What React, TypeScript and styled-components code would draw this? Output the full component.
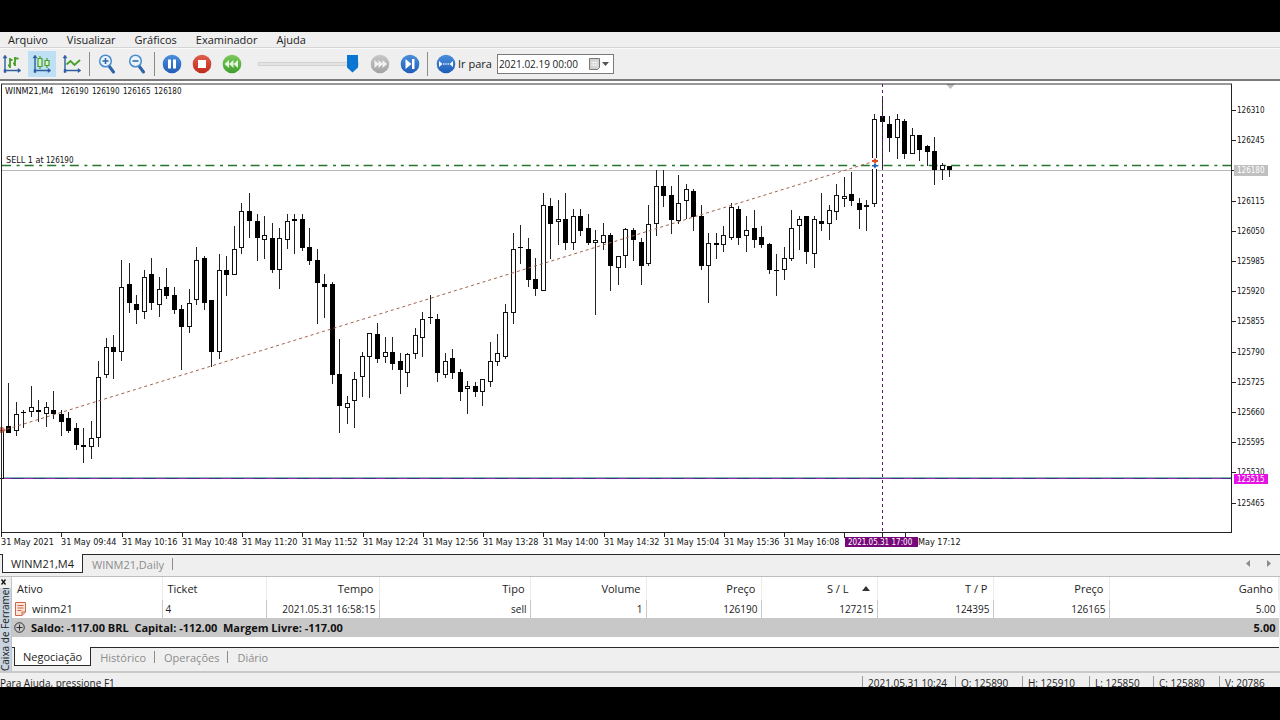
import React from "react";
import styled, { createGlobalStyle } from "styled-components";

const UI = '"Open Sans", "Noto Sans", sans-serif';
const CHART = '"DejaVu Sans Condensed", "DejaVu Sans", sans-serif';

const Global = createGlobalStyle`
  * { box-sizing: border-box; }
  body { margin: 0; background: #000; color: #222; font-family: ${UI}; font-size: 11px; line-height: 16px; }
  button, input { font: inherit; color: inherit; border: 0; padding: 0; margin: 0; background: none; }
`;

const Screen = styled.div`
  min-height: 100vh;
  padding: 32px 0 33px;
  background: #000;
  overflow: hidden;
`;
const Window = styled.main`
  display: flex;
  flex-direction: column;
  background: #efefef;
`;

const MenuBar = styled.nav`
  display: flex;
  gap: 19px;
  height: 16px;
  padding: 0 8px;
  border-bottom: 1px solid #d4d4d4;
`;
const MenuItem = styled.button`
  line-height: 14px;
`;

const Toolbar = styled.div`
  display: flex;
  align-items: center;
  gap: 2px;
  height: 33px;
  margin-left: -2px;
  padding-bottom: 1px;
  border-top: 1px solid #fafafa;
  border-bottom: 2px solid #7d7a7d;
`;
const ToolButton = styled.button<{ $on?: boolean }>`
  display: flex;
  align-items: center;
  justify-content: center;
  flex: none;
  width: 28px;
  height: 26px;
  background: ${(p) => (p.$on ? "#bfdff5" : "transparent")};
`;
const Separator = styled.span`
  width: 1px;
  height: 24px;
  margin: 0 1px;
  background: #8c8c8c;
`;
const GoTo = styled.button`
  display: flex;
  align-items: center;
  gap: 2px;
  margin-left: 5px;
`;
const Slider = styled.input`
  appearance: none;
  width: 101px;
  height: 20px;
  margin: 0 5px 0 10px;
  &::-webkit-slider-runnable-track {
    height: 4px;
    background: #e2e2e2;
    border: 1px solid #d3d3d3;
  }
  &::-webkit-slider-thumb {
    appearance: none;
    width: 11px;
    height: 18px;
    margin-top: -8px;
    background: #0a76d1;
    clip-path: polygon(0 0, 100% 0, 100% 72%, 50% 100%, 0 72%);
  }
`;
const DateBox = styled.div`
  display: flex;
  align-items: center;
  width: 117px;
  height: 20px;
  margin-left: 3px;
  padding: 0 4px 0 1px;
  border: 1px solid #7a7a7a;
  background: #fff;
`;
const DateInput = styled.input`
  flex: 1;
  min-width: 0;
  font-size: 10px;
`;
const DateButton = styled.button`
  display: flex;
  flex: none;
`;

const ChartArea = styled.section`
  height: 473px;
  background: #fff;
`;
const ChartSvg = styled.svg`
  display: block;
  width: 100%;
  height: 100%;
  font-family: ${CHART};
`;

const TabBar = styled.div`
  display: flex;
  align-items: flex-start;
  height: 22px;
  padding-left: 2px;
  border-top: 1px solid #2b2b2b;
  background: #efefef;
`;
const Tab = styled.button<{ $active?: boolean }>`
  height: ${(p) => (p.$active ? 19 : 18)}px;
  margin-top: ${(p) => (p.$active ? -1 : 0)}px;
  padding: ${(p) => (p.$active ? "1px 8px 0" : "1px 8px 0 9px")};
  line-height: 16px;
  color: ${(p) => (p.$active ? "#1c1c1c" : "#8c8c8c")};
  background: ${(p) => (p.$active ? "#fff" : "transparent")};
  border: solid #2b2b2b;
  border-width: ${(p) => (p.$active ? "0 1px 1px 1px" : "0")};
`;
const TabRule = styled.span`
  width: 1px;
  height: 12px;
  margin-top: 3px;
  background: #8c8c8c;
`;
const TabScroll = styled.div`
  display: flex;
  gap: 15px;
  margin: 5px 9px 0 auto;
`;
const ArrowButton = styled.button`
  display: flex;
`;

const Toolbox = styled.section`
  display: flex;
  height: 95px;
  border-top: 1px solid #bdbdbd;
`;
const SideStrip = styled.div`
  display: flex;
  flex-direction: column;
  align-items: center;
  flex: none;
  width: 12px;
  border-right: 1px solid #c4c4c4;
`;
const CloseButton = styled.button`
  display: flex;
  padding: 2px 4px 3px 0;
`;
const SideTitle = styled.div`
  flex: 1;
  width: 11px;
  min-height: 0;
  overflow: hidden;
  background: #c8d4e0;
  writing-mode: vertical-rl;
  transform: rotate(180deg);
  font-size: 10px;
  line-height: 11px;
  white-space: nowrap;
`;
const ToolboxBody = styled.div`
  display: flex;
  flex-direction: column;
  flex: 1;
  min-width: 0;
  padding-right: 1px;
`;
const TableArea = styled.div`
  height: 70px;
  background: #fff;
`;
const Table = styled.table`
  width: 100%;
  table-layout: fixed;
  border-collapse: collapse;
`;
const Head = styled.th<{ $left?: boolean }>`
  height: 23px;
  padding: 0 5px;
  font-weight: 400;
  text-align: ${(p) => (p.$left ? "left" : "right")};
  border-right: 1px solid #ececec;
`;
const SortArrow = styled.svg`
  margin: 0 2px 2px 13px;
`;
const Cell = styled.td<{ $left?: boolean }>`
  height: 18px;
  padding: 0 3px;
  font-size: 10px;
  text-align: ${(p) => (p.$left ? "left" : "right")};
  border-right: 1px solid #c9c9c9;
  &:last-child { border-right: 0; }
`;
const WithIcon = styled.span`
  display: flex;
  align-items: center;
  gap: 6px;
  font-size: 11px;
`;
const TotalRow = styled.tr`
  background: #c8c8c8;
  font-weight: 700;
`;
const TotalCell = styled.td`
  height: 19px;
  padding: 0 3px 0 2px;
  color: #111;
  white-space: pre;
  &:last-child { text-align: right; }
`;
const TotalText = styled.span`
  display: flex;
  align-items: center;
  gap: 6px;
`;

const StatusBar = styled.footer`
  display: flex;
  height: 16px;
  border-top: 2px solid #c9c9c9;
  overflow: hidden;
  font-size: 10px;
  line-height: 20px;
`;
const StatusHint = styled.span`
  flex: 1;
`;
const StatusCell = styled.span<{ $w: number }>`
  width: ${(p) => p.$w}px;
  height: 20px;
  margin-top: 3px;
  padding-left: 5px;
  line-height: 14px;
  border-left: 1px solid #9a9a9a;
`;

/* open/close bodies in plot units: high, body top, body bottom, low, kind (1 = falling, 0 = rising) */
const candles: number[][] = [
  [430, 430, 479, 479, 0], [383, 426, 433, 433, 1], [402, 414, 431, 436, 0], [410, 412, 412, 428, 1],
  [386, 407, 412, 417, 0], [400, 410, 412, 422, 1], [402, 407, 414, 427, 0], [391, 410, 414, 419, 1],
  [410, 414, 422, 436, 1], [412, 418, 431, 433, 1], [423, 428, 445, 450, 1], [428, 445, 447, 463, 1],
  [421, 438, 447, 459, 0], [361, 377, 438, 447, 0], [338, 347, 375, 378, 0], [335, 347, 352, 379, 1],
  [260, 287, 352, 361, 0], [263, 284, 303, 313, 1], [295, 304, 310, 324, 1], [270, 277, 312, 319, 0],
  [258, 274, 303, 310, 1], [277, 289, 305, 317, 0], [268, 287, 296, 299, 1], [287, 295, 310, 314, 1],
  [305, 309, 327, 370, 1], [289, 303, 327, 333, 0], [247, 260, 300, 305, 0], [256, 258, 303, 310, 1],
  [300, 300, 352, 367, 1], [254, 270, 352, 359, 0], [256, 270, 275, 296, 1], [226, 249, 275, 275, 0],
  [203, 211, 248, 254, 0], [193, 211, 221, 238, 1], [214, 221, 238, 261, 1], [216, 235, 240, 259, 0],
  [223, 238, 270, 273, 1], [228, 238, 270, 289, 0], [214, 221, 240, 249, 0], [214, 219, 221, 254, 1],
  [214, 219, 248, 251, 1], [228, 247, 261, 265, 1], [249, 260, 283, 324, 1], [274, 284, 287, 318, 1],
  [282, 284, 375, 384, 1], [339, 374, 406, 433, 1], [396, 403, 408, 424, 0], [372, 379, 401, 428, 0],
  [352, 356, 377, 397, 0], [333, 333, 357, 398, 0], [323, 334, 359, 363, 1], [337, 352, 357, 363, 0],
  [337, 352, 364, 370, 1], [353, 361, 370, 394, 1], [353, 354, 373, 387, 0], [328, 335, 354, 359, 0],
  [312, 319, 338, 357, 0], [295, 317, 317, 324, 1], [314, 319, 373, 382, 1], [353, 361, 375, 378, 0],
  [349, 358, 373, 379, 1], [369, 372, 392, 401, 1], [381, 386, 389, 414, 0], [382, 386, 392, 397, 1],
  [379, 379, 392, 406, 0], [342, 361, 382, 387, 0], [334, 353, 362, 366, 0], [304, 312, 357, 359, 0],
  [233, 249, 313, 324, 0], [225, 247, 247, 264, 1], [238, 249, 280, 287, 1], [258, 279, 289, 296, 1],
  [193, 205, 291, 291, 0], [198, 206, 224, 259, 1], [200, 219, 222, 245, 0], [193, 219, 243, 250, 1],
  [209, 216, 243, 250, 0], [209, 216, 231, 236, 1], [214, 228, 243, 245, 1], [230, 240, 243, 315, 0],
  [223, 235, 243, 250, 0], [233, 235, 266, 291, 1], [256, 256, 268, 285, 0], [228, 229, 256, 268, 0],
  [228, 230, 240, 261, 1], [238, 242, 266, 285, 1], [205, 224, 264, 266, 0], [170, 186, 224, 236, 0],
  [170, 186, 196, 207, 1], [186, 195, 220, 234, 1], [175, 203, 221, 224, 0], [184, 189, 201, 219, 0],
  [189, 191, 217, 231, 1], [205, 216, 266, 270, 1], [233, 243, 266, 303, 0], [233, 243, 245, 259, 1],
  [226, 235, 245, 252, 0], [203, 207, 238, 240, 0], [206, 209, 238, 245, 1], [216, 230, 236, 252, 0],
  [210, 228, 240, 248, 1], [226, 237, 245, 248, 1], [243, 244, 270, 274, 1], [254, 270, 270, 296, 1],
  [247, 258, 270, 280, 0], [210, 228, 259, 261, 0], [216, 219, 226, 250, 0], [216, 216, 252, 264, 1],
  [216, 219, 254, 268, 0], [193, 221, 224, 231, 1], [205, 210, 224, 240, 0], [184, 195, 212, 220, 0],
  [177, 196, 199, 207, 0], [172, 194, 201, 206, 1], [198, 203, 210, 229, 1], [200, 205, 207, 231, 0],
  [114, 119, 204, 207, 0], [97, 116, 122, 168, 1], [116, 124, 138, 152, 1], [114, 119, 138, 159, 0],
  [119, 121, 154, 159, 1], [128, 135, 154, 154, 0], [135, 135, 150, 161, 1], [145, 146, 152, 166, 1],
  [137, 151, 170, 185, 1], [163, 165, 170, 180, 0], [166, 166, 170, 177, 1],
];

const STEP = 7.53;

function Candle({ i, d }: { i: number; d: number[] }) {
  const [high, top, bottom, low, falling] = d;
  const x = Math.floor(1 + STEP * i);
  return (
    <g>
      <path d={`M${x + 0.5} ${high}V${low}`} stroke="#222" />
      {falling ? (
        <rect x={x - 2} y={top} width={5} height={Math.max(bottom - top, 1)} fill="#000" />
      ) : (
        <rect x={x - 1.5} y={top + 0.5} width={4} height={Math.max(bottom - top - 1, 1)} fill="#fff" stroke="#111" />
      )}
    </g>
  );
}

const times = [
  "31 May 2021", "31 May 09:44", "31 May 10:16", "31 May 10:48", "31 May 11:20", "31 May 11:52", "31 May 12:24",
  "31 May 12:56", "31 May 13:28", "31 May 14:00", "31 May 14:32", "31 May 15:04", "31 May 15:36", "31 May 16:08",
];
const prices = Array.from({ length: 14 }, (_, i) => 126310 - 65 * i);

function Chart() {
  return (
    <ChartSvg role="img" aria-label="WINM21,M4">
      <g transform="translate(0 -81)">
        {/* crosshair time line and levels */}
        <path d="M882.5 84V532" stroke="#5a1a6a" strokeDasharray="3 3" />
        <line x1="2" x2="100%" y1="170.5" y2="170.5" stroke="#b8b8b8" />
        <line x1="2" x2="100%" y1="165.500" y2="165.500" stroke="#23762b" strokeWidth="1.300" strokeDasharray="9 5.600 3 5" />
        <line x1="2" x2="100%" y1="477.500" y2="477.500" stroke="#7fbdb8" />
        <line x1="2" x2="100%" y1="478.500" y2="478.500" stroke="#4b2a86" />
        <line x1="2" x2="100%" y1="478.500" y2="478.500" stroke="#9a24b4" strokeDasharray="9 13" />

        {candles.map((d, i) => (
          <Candle key={i} i={i} d={d} />
        ))}
        <path d="M1 431L875 161" stroke="#a2614c" strokeDasharray="3 3" fill="none" />
        <path d="M0 427h3l3 3-3 3H0z" fill="#c84a30" opacity="0.7" />
        <path d="M882.5 97V168" stroke="#5a1a6a" strokeDasharray="3 3" />

        {/* entry markers */}
        <rect x="872" y="158" width="6" height="11" fill="#fff" />
        <path d="M875 158l1.500 2h1.500v2h-1.500l-1.500 2-1.500-2h-1.500v-2h1.500z" fill="#dc4f26" />
        <path d="M875 163l1.500 2h1.500v1.500h-1.500l-1.500 2-1.500-2h-1.500v-1.500h1.500z" fill="#1f66b8" />
        <path d="M946 84h9l-4.500 5z" fill="#bdbdbd" />

        {/* frame and captions */}
        <path d="M1.500 84V533" stroke="#222" />
        <text y="94" fontSize="8" fill="#111">
          <tspan x="5" fontSize="9">WINM21,M4</tspan>
          <tspan x="61">126190</tspan>
          <tspan x="92">126190</tspan>
          <tspan x="123">126165</tspan>
          <tspan x="154">126180</tspan>
        </text>
        <text y="163" fontSize="8" fill="#111">
          <tspan x="6" fontSize="9">SELL 1 at</tspan>
          <tspan x="46">126190</tspan>
        </text>

        {/* price axis, kept at the right edge */}
        <svg x="100%" overflow="visible">
          <rect x="-48" y="82" width="48" height="460" fill="#fff" />
          <path d="M-48.500 84V533" stroke="#222" />
          {prices.map((p, i) => {
            const y = Math.round(110 + 30.2 * i);
            return (
              <g key={p}>
                <path d={`M-48 ${y + 0.5}h4`} stroke="#222" />
                {p !== 126180 && (
                  <text x="-43" y={y + 3} fontSize="8" fill="#111">{p}</text>
                )}
              </g>
            );
          })}
          <rect x="-46" y="165" width="34" height="11" fill="#c0c0c0" />
          <text x="-43" y="173" fontSize="8" fill="#fff">126180</text>
          <rect x="-46" y="474" width="34" height="10" fill="#e412e4" />
          <text x="-43" y="482" fontSize="8" fill="#fff">125515</text>
        </svg>
        <svg width="100%" overflow="visible">
          <line x1="1" x2="100%" y1="84" y2="84" stroke="#333" />
          <line x1="1" x2="100%" y1="532.500" y2="532.500" stroke="#222" />
        </svg>
        <svg x="100%" overflow="visible">
          <rect x="-48" y="82" width="48" height="4" fill="#fff" />
          <rect x="-48" y="531" width="48" height="4" fill="#fff" />
        </svg>

        {/* time axis */}
        {times.map((t, i) => {
          const x = Math.round(1 + 60.25 * i);
          return (
            <g key={t}>
              <path d={`M${x + 0.5} 533v4`} stroke="#222" />
              <text x={x} y="545" fontSize="9" fill="#111">{t}</text>
            </g>
          );
        })}
        <path d="M844.500 533v5M882.500 533v4M905.500 533v4" stroke="#222" />
        <rect x="845" y="537" width="73" height="10" fill="#76087a" />
        <text x="848" y="545" fontSize="8" fill="#fff">2021.05.31 17:00</text>
        <text x="918" y="545" fontSize="9" fill="#111">May 17:12</text>
      </g>
    </ChartSvg>
  );
}

/* toolbar icons share one 20px box */
const Icon = ({ children }: { children: React.ReactNode }) => (
  <svg width="20" height="20" viewBox="0 0 20 20" fill="none" aria-hidden="true">{children}</svg>
);
const Axes = () => (
  <g stroke="#2f5f9e" strokeWidth="1.400">
    <path d="M3 2V16.500H18" />
    <path d="M1 4L3 1l2 3zM16 14.500l3 2-3 2zM2 15.500h2v3H2z" fill="#2f5f9e" strokeWidth="0.500" />
  </g>
);
const Ball = ({ id, a, b, children }: { id: string; a: string; b: string; children: React.ReactNode }) => (
  <Icon>
    <defs>
      <linearGradient id={id} x1="0" y1="0" x2="0" y2="1">
        <stop offset="0" stopColor={a} />
        <stop offset="1" stopColor={b} />
      </linearGradient>
    </defs>
    <circle cx="10" cy="10" r="9.300" fill={`url(#${id})`} />
    {children}
  </Icon>
);
const Lens = ({ plus }: { plus?: boolean }) => (
  <Icon>
    <path d="M12 12l4.500 6" stroke="#2d62a8" strokeWidth="3" strokeLinecap="round" />
    <circle cx="8.500" cy="7" r="5.800" fill="#e8f3fb" stroke="#4a8ccc" strokeWidth="1.500" />
    <path d={plus ? "M5.500 7h6M8.500 4v6" : "M5.500 7h6"} stroke="#2d62a8" strokeWidth="1.500" />
  </Icon>
);

const columns = ["Ativo", "Ticket", "Tempo", "Tipo", "Volume", "Preço", "S / L", "T / P", "Preço", "Ganho"];
const widths = [150, 104, 113, 151, 116, 115, 116, 116, 116];
const values = ["winm21", "4", "2021.05.31 16:58:15", "sell", "1", "126190", "127215", "124395", "126165", "5.00"];

export default function App() {
  return (
    <Screen>
      <Global />
      <Window>
        <MenuBar>
          {["Arquivo", "Visualizar", "Gráficos", "Examinador", "Ajuda"].map((m) => (
            <MenuItem key={m}>{m}</MenuItem>
          ))}
        </MenuBar>

        <Toolbar>
          <ToolButton aria-label="Barras">
            <Icon>
              <Axes />
              <path d="M8 4v10M6 11.500h2M8 6h2.500M13 3v9M11 9.500h2M13 4.500h3.500" stroke="#4aa02c" strokeWidth="1.900" />
            </Icon>
          </ToolButton>
          <ToolButton $on aria-label="Velas">
            <Icon>
              <Axes />
              <path d="M8 2v13M15 4v10" stroke="#4aa02c" strokeWidth="1.200" />
              <path d="M6 4.500h4v8H6zM13 6.500h4v5h-4z" fill="#d8f2d0" stroke="#4aa02c" strokeWidth="1.200" />
            </Icon>
          </ToolButton>
          <ToolButton aria-label="Linha">
            <Icon>
              <Axes />
              <path d="M4.500 10.500l4-3.500 4 4 5.500-5" stroke="#4aa02c" strokeWidth="1.900" />
            </Icon>
          </ToolButton>
          <Separator />
          <ToolButton aria-label="Ampliar"><Lens plus /></ToolButton>
          <ToolButton aria-label="Reduzir"><Lens /></ToolButton>
          <Separator />
          <ToolButton aria-label="Pausar">
            <Ball id="pause" a="#4a8fdc" b="#1f5cb8">
              <path d="M6 5.500h3v9H6zM11 5.500h3v9h-3z" fill="#fff" />
            </Ball>
          </ToolButton>
          <ToolButton aria-label="Parar">
            <Ball id="stop" a="#e0604c" b="#bf2a1c">
              <rect x="6" y="6" width="8" height="8" fill="#fff" />
            </Ball>
          </ToolButton>
          <ToolButton aria-label="Mais lento">
            <Ball id="slow" a="#7cc95c" b="#3f9f2c">
              <path d="M7 6v8L2.500 10zM11.500 6v8L7 10zM16 6v8l-4.500-4z" fill="#e4f6dc" />
            </Ball>
          </ToolButton>
          <Slider type="range" min="0" max="100" defaultValue="100" aria-label="Velocidade" />
          <ToolButton aria-label="Mais rápido">
            <Ball id="fast" a="#c8c8c8" b="#a2a2a2">
              <path d="M4.500 6v8L9 10zM8.500 6v8l4.500-4zM12.500 6v8l4.500-4z" fill="#f2f2f2" />
            </Ball>
          </ToolButton>
          <ToolButton aria-label="Próximo">
            <Ball id="next" a="#4a8fdc" b="#1f5cb8">
              <path d="M5.500 5v10l6-5zM12 5h2.500v10H12z" fill="#fff" />
            </Ball>
          </ToolButton>
          <Separator />
          <GoTo>
            <Ball id="goto" a="#4a8fdc" b="#1f5cb8">
              <path d="M3 7v6l3.500-3zM17 7v6l-3.500-3zM7.200 9.300h1.200v1.400H7.200zM9.400 9.300h1.200v1.400H9.400zM11.600 9.300h1.200v1.400h-1.200z" fill="#fff" />
            </Ball>
            Ir para
          </GoTo>
          <DateBox>
            <DateInput defaultValue="2021.02.19 00:00" aria-label="Data" />
            <DateButton aria-label="Abrir calendário">
              <svg width="20" height="12" viewBox="0 0 20 12" aria-hidden="true">
                <path d="M0.500 0.500h10v9l-2 2h-8z" fill="#d2d2d2" stroke="#777" />
                <path d="M2 4.500h7M2 7h7M4.500 3v6M7 3v6" stroke="#f6f6f6" strokeWidth="0.700" />
                <path d="M13 4h7l-3.500 4z" fill="#555" />
              </svg>
            </DateButton>
          </DateBox>
        </Toolbar>

        <ChartArea><Chart /></ChartArea>

        <TabBar>
          <Tab $active>WINM21,M4</Tab>
          <Tab>WINM21,Daily</Tab>
          <TabRule />
          <TabScroll>
            <ArrowButton aria-label="Aba anterior">
              <svg width="5" height="7" aria-hidden="true"><path d="M4 0v7L0 3.500z" fill="#8a8a8a" /></svg>
            </ArrowButton>
            <ArrowButton aria-label="Próxima aba">
              <svg width="5" height="7" aria-hidden="true"><path d="M1 0v7l4-3.500z" fill="#8a8a8a" /></svg>
            </ArrowButton>
          </TabScroll>
        </TabBar>

        <Toolbox>
          <SideStrip>
            <CloseButton aria-label="Fechar">
              <svg width="5" height="6" viewBox="0 0 5 6" aria-hidden="true"><path d="M0.500 0.500l4 5M4.500 0.500l-4 5" stroke="#111" strokeWidth="1.300" /></svg>
            </CloseButton>
            <SideTitle>Caixa de Ferramentas</SideTitle>
          </SideStrip>
          <ToolboxBody>
            <TableArea>
              <Table>
                <colgroup>
                  {widths.map((w, i) => <col key={i} width={w} />)}
                  <col />
                </colgroup>
                <thead>
                  <tr>
                    {columns.map((c, i) => (
                      <Head key={i} scope="col" $left={i < 2}>
                        {c}
                        {c === "S / L" && (
                          <SortArrow width="8" height="5" aria-hidden="true"><path d="M0 5h8L4 0z" fill="#333" /></SortArrow>
                        )}
                      </Head>
                    ))}
                  </tr>
                </thead>
                <tbody>
                  <tr>
                    {values.map((v, i) => (
                      <Cell key={i} $left={i < 2}>
                        {i === 0 ? (
                          <WithIcon>
                            <svg width="11" height="14" viewBox="0 0 11 14" aria-hidden="true">
                              <path d="M0.500 0.500h10v9.500l-3.500 3.500H0.500z" fill="#fbe3d6" stroke="#c9694a" />
                              <path d="M2.500 3.500h6M2.500 6h6M2.500 8.500h4M7 13.500V10h3.500" stroke="#c9694a" fill="none" />
                            </svg>
                            {v}
                          </WithIcon>
                        ) : v}
                      </Cell>
                    ))}
                  </tr>
                  <TotalRow>
                    <TotalCell colSpan={9}>
                      <TotalText>
                        <svg width="11" height="11" viewBox="0 0 11 11" fill="none" aria-hidden="true">
                          <circle cx="5.500" cy="5.500" r="4.800" stroke="#333" />
                          <path d="M2.500 5.500h6M5.500 2.500v6" stroke="#333" />
                        </svg>
                        {"Saldo: -117.00 BRL  Capital: -112.00  Margem Livre: -117.00"}
                      </TotalText>
                    </TotalCell>
                    <TotalCell>5.00</TotalCell>
                  </TotalRow>
                </tbody>
              </Table>
            </TableArea>
            <TabBar>
              <Tab $active>Negociação</Tab>
              <Tab>Histórico</Tab>
              <TabRule />
              <Tab>Operações</Tab>
              <TabRule />
              <Tab>Diário</Tab>
            </TabBar>
          </ToolboxBody>
        </Toolbox>

        <StatusBar>
          <StatusHint>Para Ajuda, pressione F1</StatusHint>
          <StatusCell $w={93}>2021.05.31 10:24</StatusCell>
          <StatusCell $w={67}>O: 125890</StatusCell>
          <StatusCell $w={67}>H: 125910</StatusCell>
          <StatusCell $w={64}>L: 125850</StatusCell>
          <StatusCell $w={66}>C: 125880</StatusCell>
          <StatusCell $w={61}>V: 20786</StatusCell>
        </StatusBar>
      </Window>
    </Screen>
  );
}
